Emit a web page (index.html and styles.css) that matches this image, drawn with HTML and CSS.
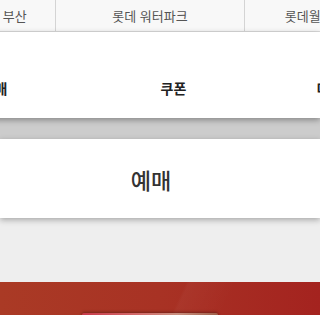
FILE: index.html
```html
<!DOCTYPE html>
<html lang="ko">
<head>
  <meta charset="UTF-8">
  <meta name="viewport" content="width=device-width, initial-scale=1.0">
  <title>롯데 워터파크 예매</title>
  <link rel="stylesheet" href="styles.css">
</head>
<body>
  <div class="park-tabs">
    <a class="park w1">롯데월드 부산</a>
    <a class="park w2">롯데 워터파크</a>
    <a class="park w3">롯데월드 어드벤처</a>
  </div>

  <div class="menu">
    <a class="menu-item">예매</a>
    <a class="menu-item">쿠폰</a>
    <a class="menu-item last">마이페이지</a>
  </div>

  <div class="dim"></div>

  <div class="card">
    <h2>예매</h2>
  </div>

  <div class="space"></div>

  <div class="promo">
    <div class="promo-card"></div>
  </div>
</body>
</html>
```

FILE: styles.css
```css
body {
  margin: 0;
  padding: 0;
  font-family: "Noto Sans CJK KR", "Noto Sans", sans-serif;
  background: #eeeeee;
  overflow: hidden;
}
.park-tabs {
  display: flex;
  height: 31px;
  margin-left: -77px;
  background: #f8f8f8;
  border-bottom: 1px solid #dcdcdc;
}
.park {
  flex: none;
  text-align: center;
  font-size: 13px;
  line-height: 31px;
  color: #555;
  white-space: nowrap;
  border-right: 1px solid #d4d4d4;
  box-sizing: border-box;
}
.w1 { width: 133px; }
.w2 { width: 189px; }
.w3 { width: 180px; }

.menu {
  position: relative;
  z-index: 2;
  display: flex;
  height: 86px;
  margin-left: -95px;
  background: #fff;
  box-shadow: 0 2px 6px rgba(0, 0, 0, 0.35);
}
.menu-item {
  flex: none;
  width: 179px;
  text-align: center;
  font-size: 14px;
  font-weight: bold;
  color: #222;
  padding-top: 45px;
  line-height: 22px;
  white-space: nowrap;
}
.menu-item.last {
  width: 172px;
}
.dim {
  height: 21px;
  background: #cccccc;
}
.card {
  position: relative;
  z-index: 1;
  height: 79px;
  background: #fff;
  box-shadow: 0 2px 6px rgba(0, 0, 0, 0.3);
  display: flex;
  align-items: center;
  justify-content: center;
  padding-right: 18px;
}
.card h2 {
  margin: 0;
  font-size: 22px;
  font-weight: 500;
  color: #333;
}
.space {
  height: 64px;
}
.promo {
  height: 40px;
  padding-top: 31px;
  box-sizing: border-box;
  background:
    linear-gradient(115deg, rgba(255,255,255,0) 55%, rgba(255,255,255,0.03) 56%, rgba(255,255,255,0) 70%),
    linear-gradient(90deg, #aa3a25 0%, #a83224 50%, #a4231f 100%);
}
.promo-card {
  width: 136px;
  height: 10px;
  margin-left: 82px;
  border-radius: 2px;
  background: linear-gradient(90deg, #c83a4a 0%, #d36a6a 40%, #c99080 70%, #a0604a 100%);
  box-shadow: 0 -1px 3px rgba(0, 0, 0, 0.3);
}
```
